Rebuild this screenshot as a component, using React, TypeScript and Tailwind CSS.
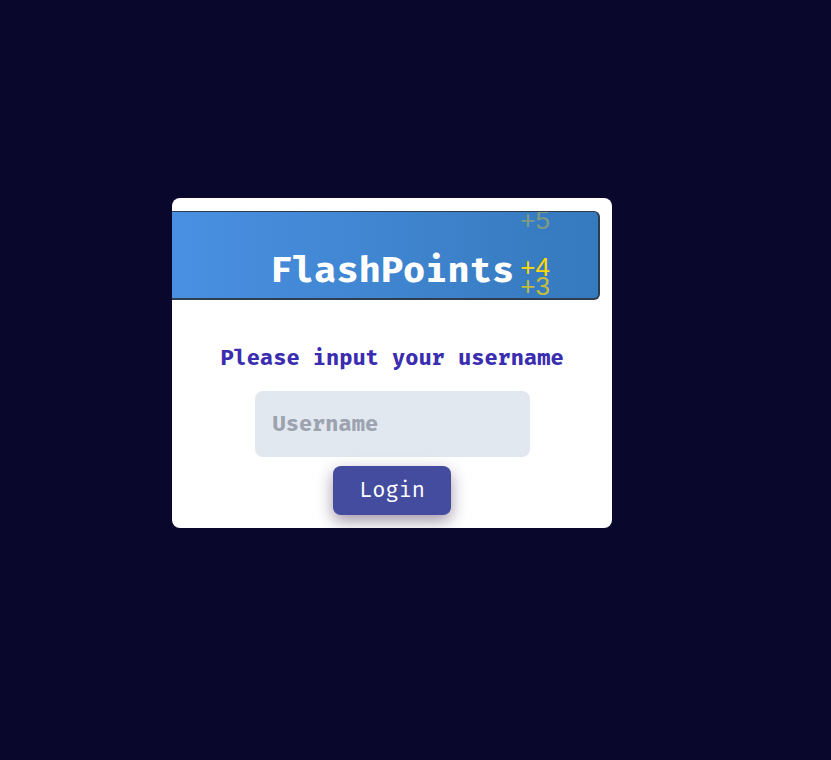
const points = [
  { label: "+5", style: "-top-[6px] opacity-35" },
  { label: "+4", style: "top-[41px]" },
  { label: "+3", style: "top-[60px] opacity-70" },
];

function Banner() {
  return (
    <header className="relative mr-3 flex h-[89px] items-end justify-center overflow-hidden rounded-r-md border-t border-r-2 border-b-2 border-[#2c3e50] bg-linear-to-r from-[#4a90e2] to-[#357abd]">
      <h1 className="pb-2 pl-3.5 font-['Fira_Mono','Fira_Code','Liberation_Mono',monospace] text-[37px] leading-10 font-bold text-white">
        FlashPoints
      </h1>
      {points.map((point) => (
        <span
          key={point.label}
          className={`absolute right-12 font-['Liberation_Sans',sans-serif] text-[26px] leading-7 text-[#ffd700] ${point.style}`}
        >
          {point.label}
        </span>
      ))}
    </header>
  );
}

export default function App() {
  return (
    <main className="flex min-h-screen items-center justify-center bg-[#09072b] pr-[47px] pb-[34px] font-['Fira_Mono','Fira_Code','Liberation_Mono',monospace] text-[22px]">
      <section className="w-full max-w-[440px] overflow-hidden rounded-lg bg-white py-[13px]">
        <Banner />
        <form
          className="flex flex-col items-center pt-[42px]"
          onSubmit={(event) => event.preventDefault()}
        >
          <label htmlFor="username" className="leading-8 font-bold text-[#3a2db0]">
            Please input your username
          </label>
          <input
            id="username"
            type="text"
            placeholder="Username"
            className="mt-[17px] h-[66px] w-[275px] rounded-lg bg-[#e2e8f0] px-[18px] pb-px font-bold text-[#3a2db0] outline-none placeholder:text-[#9ca3af]"
          />
          <button
            type="submit"
            className="mt-[9px] rounded-lg bg-[#444ca0] px-[26px] pt-2 pb-[10px] leading-[31px] text-white shadow-[0_6px_16px_rgba(40,20,60,0.45)]"
          >
            Login
          </button>
        </form>
      </section>
    </main>
  );
}
